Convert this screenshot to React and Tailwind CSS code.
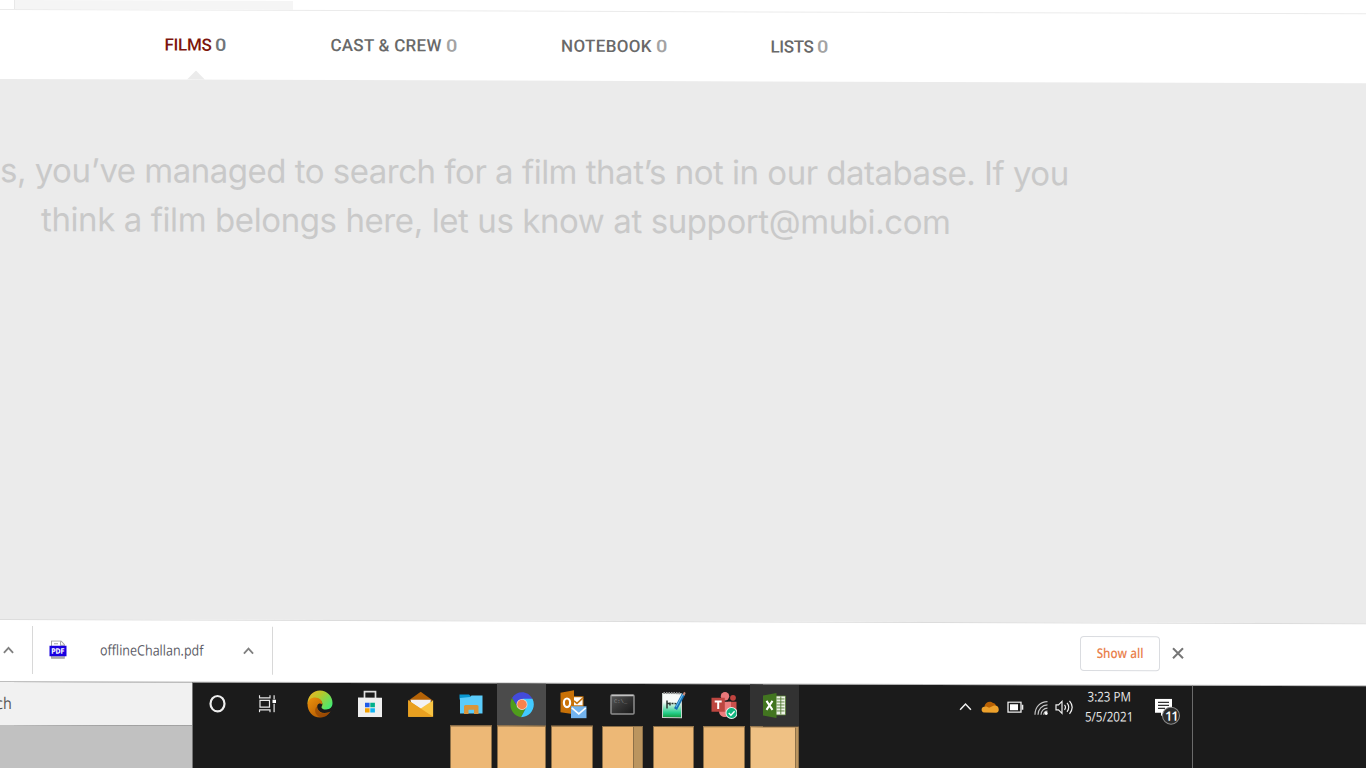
import React from 'react';

const tabs = [
  { label: 'FILMS', box: 'ml-[164.500px] w-[166px]', color: 'text-[#7d150c] tracking-[-0.300px]', num: 'text-[#70757a]' },
  { label: 'CAST & CREW', box: 'w-[230.500px]', color: 'text-[#696969] tracking-[0.250px]', num: 'text-[#a3a3a3]' },
  { label: 'NOTEBOOK', box: 'w-[209.500px]', color: 'text-[#696969] tracking-[0.330px]', num: 'text-[#a3a3a3]' },
  { label: 'LISTS', box: 'w-[120px]', color: 'text-[#696969] tracking-[-0.350px]', num: 'text-[#a3a3a3]' },
];

function Caret({ className, stroke = '#808080', w = 2 }) {
  return (
    <svg className={className} viewBox="0 0 12 8" fill="none" stroke={stroke} strokeWidth={w}>
      <path d="M1 7L6 1.700L11 7" />
    </svg>
  );
}

function PdfIcon() {
  return (
    <svg className="h-[19px] w-[18px] -translate-y-[1px]" viewBox="0 0 18 19">
      <path d="M2.500 18V.8H12l3.300 3.500V18z" fill="#fff" stroke="#a5a5a5" />
      <path d="M11.500 1v4h4M5 3.500h4" fill="none" stroke="#a5a5a5" />
      <path d="M3 16h12v2H3z" fill="#aaa" />
      <path d="M.5 5.500h17v10.500H.5z" fill="#1800e0" />
      <text x="2.200" y="13.600" fontSize="7.500" fontWeight="700" fill="#fff" textLength="13.500" lengthAdjust="spacingAndGlyphs" fontFamily="'DejaVu Sans', sans-serif">PDF</text>
    </svg>
  );
}

function Cortana() {
  return <svg className="h-[20px] w-[20px]" viewBox="0 0 20 20"><ellipse cx="9.500" cy="10" rx="7" ry="7.700" fill="none" stroke="#eee" strokeWidth="2.200" /></svg>;
}

function TaskView() {
  return (
    <svg className="h-[18px] w-[18px] -translate-x-[1.500px]" viewBox="0 0 18 18" fill="none" stroke="#e8e8e8" strokeWidth="1.200">
      <path d="M1 .5V3h10.500V.5M1.500 5.500h9.500v6.800H1.500zM1 17.500V15h10.500v2.500M15.600 .5v4M15.600 9v8.500" />
      <path d="M14 5h3.500v3.200H14z" fill="#fff" stroke="none" />
    </svg>
  );
}

function Edge() {
  return (
    <svg className="h-[28px] w-[26px] translate-x-[1px]" viewBox="0 0 26 28">
      <defs>
        <linearGradient id="edgeTop" x1="0" y1="0" x2="1" y2="0.700"><stop offset="0" stopColor="#ffae28" /><stop offset="0.450" stopColor="#b7c82b" /><stop offset="1" stopColor="#48ea70" /></linearGradient>
        <linearGradient id="edgeLow" x1="0" y1="0" x2="1" y2="1"><stop offset="0" stopColor="#ee930c" /><stop offset="1" stopColor="#a34c00" /></linearGradient>
      </defs>
      <path d="M.5 14C.5 6 6 .5 13 .5S25.500 6 25.500 13c0 4-2.500 6.500-6.500 6.500-3 0-4.700-1.300-4.500-2.600 1-1.400 1.200-2.700.5-4.400C13.600 8 6 6.500.5 14z" fill="url(#edgeTop)" />
      <path d="M.5 14C1.200 9.500 4.500 7.500 8 7.500c4.500 0 7.800 3 7.300 7-3.300-2.500-6 .5-4.800 4 1.300 4 7 6 13 3-2.500 3.800-6 6-10.500 6C5.500 27.500.5 21.500.5 14z" fill="url(#edgeLow)" />
      <path d="M10.300 16c-.8 6 5.700 9.800 13.200 5.500-2 3.500-5.500 5.700-9 6-6-1.500-8.500-7.500-4.200-11.500z" fill="#8b3f05" opacity=".6" />
    </svg>
  );
}

function Store() {
  return (
    <svg className="h-[27px] w-[26px]" viewBox="0 0 26 27">
      <path d="M7.500 9V1.500h11V9" fill="none" stroke="#dedede" strokeWidth="1.700" />
      <path d="M1 7.500h24V27H1z" fill="#efefef" />
      <path d="M8 12.500h4.600v4.600H8z" fill="#1f5be8" /><path d="M13.300 12.500h4.600v4.600h-4.600z" fill="#00b08b" />
      <path d="M8 18h4.600v4.400H8z" fill="#f4a000" /><path d="M13.300 18h4.600v4.400h-4.600z" fill="#10b4f4" />
    </svg>
  );
}

function Mail() {
  return (
    <svg className="h-[26px] w-[26px] translate-x-[0.700px]" viewBox="0 0 26 26">
      <path d="M.5 9.500L13 .5l12.500 9z" fill="#b46206" />
      <path d="M3 8.500h20V18H3z" fill="#f2f2f5" />
      <path d="M.5 9L13 17.500.5 25.500z" fill="#eca62a" /><path d="M25.500 9v16.500H.5z" fill="#f9c443" />
      <path d="M.5 25.500V9l25 16.500z" fill="#e9a020" />
    </svg>
  );
}

function Explorer() {
  return (
    <svg className="h-[22px] w-[24px]" viewBox="0 0 24 22">
      <path d="M.5 1h9.500l1.500 1.500V6H.5z" fill="#0897d2" />
      <path d="M1 4.500l10-1L12.500 2h11V20H1z" fill="#5accfb" />
      <path d="M5 20.500V12.300l1.500-.8h11.500l1.500.8v8.200h-4.500v-4.300h-5.500v4.300z" fill="#d8953a" />
    </svg>
  );
}

function Chrome() {
  return (
    <svg className="h-[26px] w-[24px]" viewBox="0 0 24 26">
      <path d="M2 6.500C6.500-1.500 18-1.500 22.300 7L12 8 7.500 15z" fill="#434bdc" />
      <path d="M2 6.500C-1.800 14 1.500 24 11 25.500L16.500 15 7.200 15z" fill="#4f9d1b" />
      <path d="M22.500 7c4 8-1.500 18.500-11.500 18.500L16.700 15 12.500 7z" fill="#42caff" />
      <circle cx="12" cy="12.800" r="5.500" fill="#e5d8d8" /><circle cx="12" cy="12.800" r="4.700" fill="#fa824c" />
    </svg>
  );
}

function Outlook() {
  return (
    <svg className="h-[29px] w-[27px] translate-x-[1px]" viewBox="0 0 27 29">
      <path d="M12 6.500h11.500V19H12z" fill="#c77712" /><path d="M13.500 7.500h9v8h-9z" fill="#fff" /><path d="M14 11l3 2.500 6-5.500" fill="none" stroke="#c77712" strokeWidth="1.600" />
      <path d="M.5 3L14 .5v24L.5 22.500z" fill="#c87107" />
      <ellipse cx="7" cy="13" rx="3.100" ry="4.300" fill="none" stroke="#fff" strokeWidth="2.200" />
      <path d="M11 16.500h15.500v12H11z" fill="#72b3ee" /><path d="M11.800 18l7 6 7-6" fill="none" stroke="#f7fbff" strokeWidth="1.700" />
    </svg>
  );
}

function Terminal() {
  return (
    <svg className="h-[21px] w-[25px]" viewBox="0 0 25 21">
      <defs><linearGradient id="term" x1="0" y1="0" x2="1" y2="1"><stop offset="0" stopColor="#5a5a5a" /><stop offset=".5" stopColor="#343434" /><stop offset="1" stopColor="#171717" /></linearGradient></defs>
      <rect x="1" y="1" width="23" height="19" rx="1" fill="url(#term)" stroke="#8e8e8e" strokeWidth="1.500" />
      <path d="M1.500 1.500h22" stroke="#c2c2c2" strokeWidth="1.500" />
      <text x="4" y="9" fontSize="5.500" fill="#8a8a8a" fontFamily="'Liberation Mono', monospace">C:\_</text>
    </svg>
  );
}

function Notepad() {
  return (
    <svg className="h-[28px] w-[25px]" viewBox="0 0 25 28">
      <defs><linearGradient id="note" x1="0" y1="0" x2="0" y2="1"><stop offset=".35" stopColor="#f7faf8" /><stop offset=".8" stopColor="#26cf8b" /><stop offset="1" stopColor="#139a3d" /></linearGradient></defs>
      <path d="M1.500 2.500h19v24h-19z" fill="url(#note)" stroke="#c9d2cd" />
      <path d="M2.500 2h17" stroke="#909090" strokeWidth="2" strokeDasharray="1.500 1" />
      <path d="M6 9.500v8M6 12.500h3M9 11.500v3M10.500 12.500h2M13.500 12.500h2" stroke="#28352f" strokeWidth="1.500" />
      <path d="M14.500 18L22.500 3" stroke="#1672b8" strokeWidth="3.300" /><path d="M15 16L22 3" stroke="#6dc0ed" strokeWidth="1" />
      <path d="M21.500 3.500l1.600-3 1.600 1.300-1.200 2.700z" fill="#c98a79" />
    </svg>
  );
}

function Teams() {
  return (
    <svg className="h-[28px] w-[26px]" viewBox="0 0 26 28">
      <circle cx="14" cy="5" r="4.200" fill="#e8787a" /><circle cx="22" cy="6.500" r="2.900" fill="#c1443f" />
      <path d="M17 10.500h8.500V20c-2 3-5 3-8.500 1z" fill="#c9504b" />
      <path d="M8 10.500h12V21c-1 6-11 7-12-.5z" fill="#ec7d7e" />
      <path d="M.5 6.500h13.300v14H.5z" fill="#bd4640" /><path d="M3.700 10.300h7M7.200 10.300v7.500" stroke="#fff" strokeWidth="2" />
      <circle cx="20.500" cy="21.800" r="5.500" fill="#10b57f" stroke="#e6f2ed" strokeWidth="1" /><path d="M17.700 21.800l2.200 2.200 3.700-4" fill="none" stroke="#fff" strokeWidth="1.400" />
    </svg>
  );
}

function Excel() {
  return (
    <svg className="h-[26px] w-[24px] -translate-x-[0.500px]" viewBox="0 0 24 26">
      <path d="M13 3.500h10V22.500H13z" fill="#eef3e8" stroke="#547b33" strokeWidth=".8" />
      <path d="M14 6.500h8M14 9.500h8M14 12.500h8M14 15.500h8M14 18.500h8M18.300 4v18" stroke="#547b33" strokeWidth=".9" />
      <path d="M.5 3L14 .5v25L.5 23z" fill="#427520" />
      <path d="M4 8.500l6 9M10 8.500l-6 9" stroke="#fff" strokeWidth="2" />
    </svg>
  );
}

const apps = [
  { Icon: Cortana }, { Icon: TaskView }, { Icon: Edge }, { Icon: Store }, { Icon: Mail },
  { Icon: Explorer, bar: 'w-[41.500px]' },
  { Icon: Chrome, bar: 'w-[49.500px]', cell: 'bg-[#4b4b4b]' },
  { Icon: Outlook, bar: 'w-[41.500px]' },
  { Icon: Terminal, bar: 'w-[41.500px]', edge: 'w-[9px]' },
  { Icon: Notepad, bar: 'w-[41.500px]' },
  { Icon: Teams, bar: 'w-[41.500px]' },
  { Icon: Excel, bar: 'w-[49.500px]', fill: 'bg-[#efc184]', cell: 'bg-[#323232]', edge: 'w-[3.500px]' },
];

function Tray() {
  return (
    <div className="flex h-[42.500px] items-center pt-[1px] font-['Open_Sans',sans-serif]">
      <Caret className="h-[9px] w-[13px]" stroke="#f0f0f0" w={1.4} />
      <svg className="ml-[9px] h-[13px] w-[18px]" viewBox="0 0 18 13">
        <path d="M3.500 6C4 2.500 9 0 12 3c1.500.2 3 1.500 3 3l-6 5z" fill="#b86104" />
        <path d="M3 12.500c-3.500-1-3-5.500.5-6 2-.2 3.500.5 4.500 1.200L13 5.500c3-.5 5 1.500 4.700 4.500-.2 1.500-1 2.500-2.700 2.500z" fill="#eda12b" />
      </svg>
      <svg className="ml-[8px] h-[12px] w-[17px]" viewBox="0 0 17 12">
        <path d="M1 1h13v10H1z" fill="none" stroke="#f0f0f0" strokeWidth="1.300" /><path d="M3 3h8v6H3z" fill="#fff" /><path d="M15.500 3.500v5" stroke="#eee" strokeWidth="1.600" />
      </svg>
      <svg className="ml-[10px] mt-[2px] h-[15px] w-[15px]" viewBox="0 0 15 15" fill="none" stroke="#c4c4c4" strokeWidth="1.200">
        <path d="M1 14.500C1 7 6 1.500 13.500 1.300M4 14.500C4 9 8 4.800 13.500 4.600M7 14.500c0-3.700 2.700-6.600 6.500-6.700M9.800 14.500c0-2 1.500-3.500 3.700-3.600" /><circle cx="12.200" cy="13" r="1.600" fill="#fff" stroke="none" />
      </svg>
      <svg className="ml-[6.500px] h-[16px] w-[18px]" viewBox="0 0 18 16" fill="none" stroke="#efefef" strokeWidth="1.200">
        <path d="M1 5.500h2.500L7 2v12l-3.500-3.500H1zM9.500 5.500c1.200 1.500 1.200 3.500 0 5M12 3.500c2.300 2.500 2.300 6.500 0 9M14.500 1.500c3.300 4 3.300 9 0 13" />
      </svg>
      <div className="ml-[6px] flex w-[60px] flex-col items-center whitespace-nowrap text-[13.500px] leading-[19.500px] text-[#ececec]">
        <span className="block scale-x-[0.860]">3:23 PM</span>
        <span className="block scale-x-[0.860]">5/5/2021</span>
      </div>
      <div className="relative ml-[15.500px] h-[18px] w-[17px]">
        <svg className="h-[18px] w-[17px]" viewBox="0 0 17 18"><path d="M0 0h17v14H9l-3 3.500V14H0z" fill="#fff" /><path d="M3 3.800h11M3 6.800h11M3 9.800h7" stroke="#333" strokeWidth="1.200" /></svg>
        <span className="absolute left-[7.500px] top-[8.500px] flex h-[18px] w-[18px] items-center justify-center rounded-full border border-[#8a8a8a] bg-[#2c2c2c] text-[13px] font-semibold tracking-[-1px] text-white">11</span>
      </div>
    </div>
  );
}

export default function App() {
  return (
    <div className="h-[768px] w-[1366px] overflow-hidden bg-white">
      <div className="flex h-[776px] w-full origin-top-left -skew-y-[-0.180deg] flex-col">
        <div className="flex h-[10px] shrink-0 border-b border-[#ebebeb] pl-[13.500px]">
          <div className="w-[279.500px] border-l border-[#e8e8e8] bg-[#f5f5f5]" />
        </div>
        <nav className="flex h-[69px] shrink-0 whitespace-nowrap font-[Roboto,sans-serif] text-[17px] font-medium">
          {tabs.map((t, i) => (
            <div key={t.label} className={`relative flex items-center ${t.box}`}>
              <span className={t.color}>{t.label}&nbsp;<span className={`inline-block origin-left scale-x-[1.180] ${t.num}`}>0</span></span>
              {i === 0 && <svg className="absolute bottom-0 left-[22.500px] h-[9px] w-[18px]" viewBox="0 0 18 9"><path d="M0 9L9 0l9 9z" fill="#ebebeb" /></svg>}
            </div>
          ))}
        </nav>
        <main className="h-[539.500px] shrink-0 overflow-hidden bg-[#ebebeb] pt-[67px] text-[#c9c9c9]">
          <p className="whitespace-nowrap font-[Inter,sans-serif] text-[33px] leading-[48.500px]">
            <span className="block tracking-[-0.500px]">s, you’ve managed to search for a film that’s not in our database. If you</span>
            <span className="block pl-[41px] tracking-[-0.410px]">think a film belongs here, let us know at support@mubi.com</span>
          </p>
        </main>
        <div className="flex h-[63.500px] shrink-0 items-center border-y border-t-[#dcdcdc] border-b-[#bdbdbd] bg-white font-['Open_Sans',sans-serif]">
          <div className="flex h-[48px] w-[33px] items-center border-r border-[#d8d8d8] pl-[3px]"><Caret className="h-[8px] w-[11px]" /></div>
          <div className="flex h-[48px] w-[240px] items-center border-r border-[#d8d8d8] pl-[16px]">
            <PdfIcon />
            <span className="ml-[33px] w-[143px] origin-left scale-x-[0.865] whitespace-nowrap text-[14.500px] text-[#5c5c66]">offlineChallan.pdf</span>
            <Caret className="h-[8px] w-[11px]" />
          </div>
          <div className="ml-[806.500px] flex h-[35px] w-[80.500px] -translate-y-[0.500px] items-center justify-center rounded-[4px] border border-[#dadce0] text-[13.500px] font-semibold text-[#e9824f]"><span className="scale-x-[0.865] whitespace-nowrap">Show all</span></div>
          <svg className="ml-[12px] h-[12px] w-[12px] -translate-y-[0.500px]" viewBox="0 0 12 12"><path d="M1 1l10 10M11 1L1 11" stroke="#777" strokeWidth="2" /></svg>
        </div>
        <div className="flex flex-1 bg-[#1b1b1b]">
          <div className="flex w-[192.700px] shrink-0 flex-col border-r border-[#777]">
            <div className="flex h-[42.500px] items-center bg-[#f1f1f1] font-['Open_Sans',sans-serif] text-[16px] text-[#555]"><span className="-ml-[4px] origin-left scale-x-[0.900]">ch</span></div>
            <div className="flex-1 bg-[#c1c1c1]" />
          </div>
          {apps.map(({ Icon, bar, cell, edge, fill }, i) => (
            <div key={i} className="flex w-[50.600px] shrink-0 flex-col items-center">
              <div className={`flex h-[41.500px] w-[49.500px] items-center justify-center ${cell || ''}`}><Icon /></div>
              {bar && (
                <div className={`flex flex-1 justify-end border border-[#8d7048] ${fill || 'bg-[#edb876]'} ${bar}`}>
                  {edge && <div className={`border-l border-[#8d7048] bg-[#bb955f] ${edge}`} />}
                </div>
              )}
            </div>
          ))}
          <div className="ml-[159px] w-[234px] border-r border-[#6b6b6b]"><Tray /></div>
        </div>
      </div>
    </div>
  );
}
